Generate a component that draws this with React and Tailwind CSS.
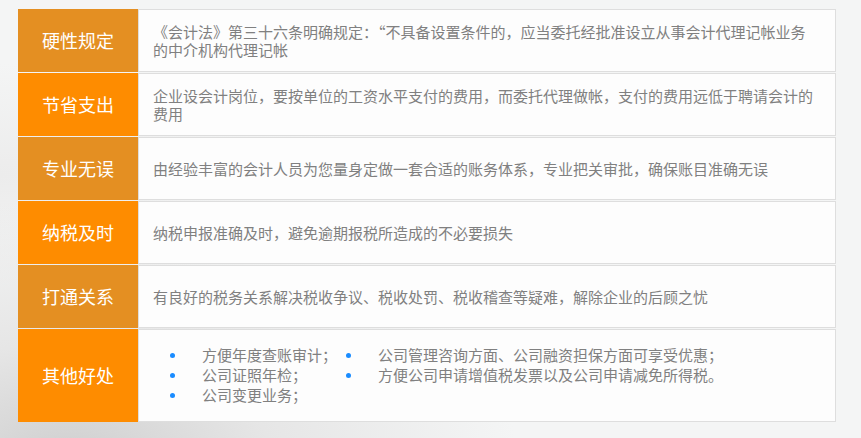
const rows = [
  {
    label: '硬性规定',
    tone: 'dark',
    text: '《会计法》第三十六条明确规定：“不具备设置条件的，应当委托经批准设立从事会计代理记帐业务的中介机构代理记帐',
  },
  {
    label: '节省支出',
    tone: 'bright',
    text: '企业设会计岗位，要按单位的工资水平支付的费用，而委托代理做帐，支付的费用远低于聘请会计的费用',
  },
  {
    label: '专业无误',
    tone: 'dark',
    text: '由经验丰富的会计人员为您量身定做一套合适的账务体系，专业把关审批，确保账目准确无误',
  },
  {
    label: '纳税及时',
    tone: 'bright',
    text: '纳税申报准确及时，避免逾期报税所造成的不必要损失',
  },
  {
    label: '打通关系',
    tone: 'dark',
    text: '有良好的税务关系解决税收争议、税收处罚、税收稽查等疑难，解除企业的后顾之忧',
  },
]

const listLeft = ['方便年度查账审计；', '公司证照年检；', '公司变更业务；']
const listRight = ['公司管理咨询方面、公司融资担保方面可享受优惠；', '方便公司申请增值税发票以及公司申请减免所得税。']

function Label({ children, tone }) {
  return (
    <div
      className={`w-[120px] shrink-0 flex items-center justify-center text-white text-[18px] ${
        tone === 'dark' ? 'bg-[#e48f22]' : 'bg-[#fe8c00]'
      }`}
    >
      {children}
    </div>
  )
}

function BulletList({ items }) {
  return (
    <ul className="flex flex-col">
      {items.map(t => (
        <li key={t} className="flex items-center h-[20px]">
          <span className="w-[5px] h-[5px] rounded-full bg-[#1a8cff] mr-[27px] shrink-0" />
          <span>{t}</span>
        </li>
      ))}
    </ul>
  )
}

export default function App() {
  return (
    <div
      className="w-[861px] h-[438px] overflow-hidden pt-[9px] pl-[18px] bg-[#f4f5f5] bg-[radial-gradient(ellipse_at_8%_105%,#cfcfcf_0%,#e6e6e6_18%,transparent_40%),radial-gradient(ellipse_at_0%_40%,#ececec_0%,transparent_30%)]"
      style={{ fontFamily: '"Microsoft YaHei", "Noto Sans CJK SC", sans-serif' }}
    >
      <div className="w-[818px] flex flex-col gap-[1px]">
        {rows.map(r => (
          <div key={r.label} className="flex h-[63px]">
            <Label tone={r.tone}>{r.label}</Label>
            <div className="flex-1 flex items-center bg-[#fdfdfd] border border-[#dedede] pl-[14px] pr-[15px] text-[15px] leading-[18px] text-[#808080]">
              <p>{r.text}</p>
            </div>
          </div>
        ))}
        <div className="flex h-[93px]">
          <Label tone="bright">其他好处</Label>
          <div className="flex-1 flex items-center bg-[#fdfdfd] border border-[#dedede] pl-[31px] text-[15px] text-[#808080]">
            <div className="w-[176px]">
              <BulletList items={listLeft} />
            </div>
            <div className="self-center mb-[20px]">
              <BulletList items={listRight} />
            </div>
          </div>
        </div>
      </div>
    </div>
  )
}
